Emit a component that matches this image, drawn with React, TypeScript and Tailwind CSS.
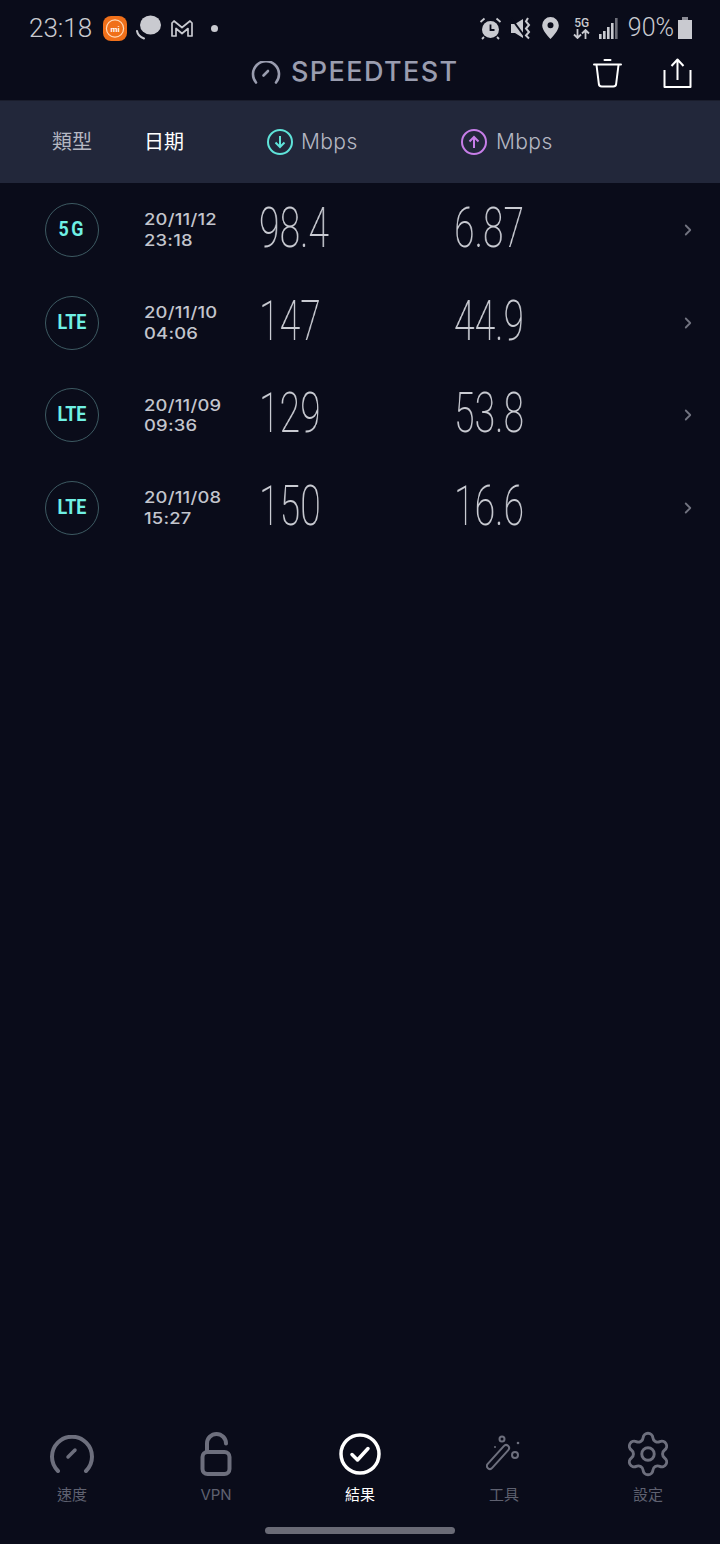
import { ChevronRight, Settings } from "lucide-react";

const SANS = "font-['Inter','Noto_Sans_CJK_TC',sans-serif]";

const RESULTS = [
  { type: "5G", date: "20/11/12", time: "23:18", down: "98.4", up: "6.87" },
  { type: "LTE", date: "20/11/10", time: "04:06", down: "147", up: "44.9" },
  { type: "LTE", date: "20/11/09", time: "09:36", down: "129", up: "53.8" },
  { type: "LTE", date: "20/11/08", time: "15:27", down: "150", up: "16.6" },
];

function StatusBar() {
  return (
    <div className="flex h-[50px] items-center pl-[29px] pr-[28px] pt-[6px] text-[#c9cad0]">
      <span className="w-[74px] font-['Roboto',sans-serif] text-[26px] font-light">23:18</span>
      {/* mi badge */}
      <svg width="24" height="25" viewBox="0 0 24 25">
        <rect width="24" height="25" rx="8" fill="#f0701a" />
        <circle cx="12" cy="12.500" r="8.600" fill="none" stroke="#ffd9b8" strokeWidth="1.200" />
        <text x="12" y="15.500" textAnchor="middle" fontSize="8" fontWeight="700" fontFamily="Roboto, sans-serif" fill="#fff">mi</text>
      </svg>
      <svg className="ml-[9px]" width="25" height="26" viewBox="0 0 25 26" fill="#c9cad0">
        <ellipse cx="14.500" cy="10" rx="10.500" ry="9.500" />
        <path d="M1 16c.5 3 3 6 7 7.500" fill="none" stroke="#c9cad0" strokeWidth="2" strokeLinecap="round" />
      </svg>
      <svg className="ml-[10px]" width="22" height="17" viewBox="0 0 22 17" fill="none" stroke="#c9cad0" strokeWidth="1.700" strokeLinejoin="round">
        <path d="M1 16V3l2-2 8 6.500L19 1l2 2v13h-4V8.500L11 13.500 5 8.500V16z" />
      </svg>
      <span className="ml-[18px] h-[7px] w-[7px] rounded-full bg-[#c9cad0]" />
      <div className="flex-1" />
      <svg width="23" height="23" viewBox="0 0 23 23" fill="#c9cad0">
        <circle cx="11.500" cy="12.500" r="8.500" />
        <path d="M11.500 7.500v5.500h4" fill="none" stroke="#0a0c1a" strokeWidth="1.800" />
        <path d="M1.500 5l4-3.500M21.500 5l-4-3.500M5 20l-2 2M18 20l2 2" fill="none" stroke="#c9cad0" strokeWidth="1.800" />
      </svg>
      <svg className="ml-[8px]" width="23" height="23" viewBox="0 0 23 23" fill="#c9cad0">
        <path d="M1 7h4l8-5v19l-8-5H1z" />
        <path d="M1 1l14 19" stroke="#0a0c1a" strokeWidth="2" />
        <path d="M18 1l-2 3.500 3 3.500-3 3.500 3 3.500-3 3.500 3 3" fill="none" stroke="#c9cad0" strokeWidth="2" />
      </svg>
      <svg className="ml-[9px]" width="17" height="22" viewBox="0 0 17 22" fill="#c9cad0">
        <path fillRule="evenodd" d="M8.500 0a8.300 8.300 0 0 1 8.300 8.300c0 5-5.300 10.500-8.300 13.700C5.500 18.800.2 13.300.2 8.300A8.300 8.300 0 0 1 8.500 0zm0 5.300a3 3 0 1 0 0 6 3 3 0 0 0 0-6z" />
      </svg>
      <div className="ml-[14px] flex w-[18px] flex-col items-center leading-none">
        <span className="font-['Roboto',sans-serif] text-[12px] font-medium leading-[12px]">5G</span>
        <svg width="17" height="10" viewBox="0 0 17 10" fill="none" stroke="#c9cad0" strokeWidth="1.800">
          <path d="M4.500 0v9M1 5.500l3.500 3.500L8 5.500M12.500 10V1M9 4.500L12.500 1 16 4.500" />
        </svg>
      </div>
      <svg className="ml-[8px]" width="19" height="21" viewBox="0 0 19 21" fill="#c9cad0">
        <rect x="0" y="16" width="2.600" height="5" />
        <rect x="4" y="13" width="2.600" height="8" />
        <rect x="8" y="9" width="2.600" height="12" />
        <rect x="12" y="5" width="2.600" height="16" />
        <rect x="16" y="0" width="2.600" height="21" fill="#6e6f79" />
      </svg>
      <span className="ml-[10px] font-['Roboto',sans-serif] text-[25px] font-light">90%</span>
      <svg className="ml-[4px]" width="14" height="22" viewBox="0 0 14 22" fill="#c9cad0">
        <rect x="4" y="0" width="6" height="3" fill="#8c8d96" />
        <rect x="0" y="3" width="14" height="19" />
      </svg>
    </div>
  );
}

function Header() {
  return (
    <div className="flex h-[50px] items-center pb-[5px] pl-[251px] pr-[28px]">
      <svg width="30" height="24" viewBox="0 0 30 24" fill="none" stroke="#9a9daf" strokeWidth="2.600" strokeLinecap="round">
        <path d="M5 21.500a13 13 0 1 1 20 0" />
        <path d="M12.500 14.500l4.500-4.500" />
      </svg>
      <span className={`ml-[10px] text-[27px] font-medium tracking-[1.400px] text-[#9a9daf] ${SANS}`}>SPEEDTEST</span>
      <div className="flex-1" />
      <svg width="29" height="30" viewBox="0 0 29 30" fill="none" stroke="#fff" strokeWidth="2" strokeLinejoin="round" strokeLinecap="round">
        <path d="M1 6.500h27M11.500 2h6" />
        <path d="M3.500 7l2.300 18.500a3 3 0 0 0 3 3h11.400a3 3 0 0 0 3-3L25.500 7" />
      </svg>
      <svg className="ml-[41px]" width="29" height="30" viewBox="0 0 29 30" fill="none" stroke="#fff" strokeWidth="2" strokeLinejoin="round">
        <path d="M1.500 12v17h26V12" />
        <path d="M14.500 22V2M8.500 8l6-6.500 6 6.500" />
      </svg>
    </div>
  );
}

function TableHead() {
  return (
    <div className={`flex h-[83px] items-center border-t border-[#1a1d2c] bg-[#22273a] text-[20px] ${SANS}`}>
      <span className="ml-[52px] w-[92px] text-[#b5b7c2]">類型</span>
      <span className="w-[123px] text-white">日期</span>
      <svg width="26" height="26" viewBox="0 0 26 26" fill="none" stroke="#5fe3d9" strokeWidth="2">
        <circle cx="13" cy="13" r="12" />
        <path d="M13 7v11M8.500 13.500L13 18l4.500-4.500" />
      </svg>
      <span className="ml-[8px] w-[160px] text-[21px] font-light tracking-[0.4px] text-[#b5b7c2]">Mbps</span>
      <svg width="26" height="26" viewBox="0 0 26 26" fill="none" stroke="#c77ee8" strokeWidth="2">
        <circle cx="13" cy="13" r="12" />
        <path d="M13 19V8M8.500 12.500L13 8l4.500 4.500" />
      </svg>
      <span className="ml-[9px] text-[21px] font-light tracking-[0.4px] text-[#b5b7c2]">Mbps</span>
    </div>
  );
}

function Row({ r }: { r: (typeof RESULTS)[number] }) {
  return (
    <div className="flex h-[92.700px] items-center pl-[45px] pr-[23px]">
      <div className="flex h-[54px] w-[54px] items-center justify-center rounded-full border border-[#3d5a62]">
        <span className={`scale-x-[0.85] font-['Roboto',sans-serif] text-[21px] font-bold text-[#6ff0e4] ${r.type === "5G" ? "tracking-[3px]" : "tracking-[0px]"}`}>{r.type}</span>
      </div>
      <div className={`ml-[45px] w-[115px] origin-left scale-x-[1.15] text-[16px] font-medium leading-[20.500px] tracking-[0.2px] text-[#c3c5cd] ${SANS}`}>
        <p>{r.date}</p>
        <p>{r.time}</p>
      </div>
      <span className="w-[195px] origin-left scale-x-[0.68] pb-[3px] font-['Roboto',sans-serif] text-[55px] font-extralight leading-none text-[#c9cbd2] will-change-transform">{r.down}</span>
      <span className="w-[195px] origin-left scale-x-[0.68] pb-[3px] font-['Roboto',sans-serif] text-[55px] font-extralight leading-none text-[#c9cbd2] will-change-transform">{r.up}</span>
      <div className="flex-1" />
      <ChevronRight size={18} strokeWidth={2.400} className="text-[#71737f]" />
    </div>
  );
}

function NavItem({ label, active, children }: { label: string; active?: boolean; children: React.ReactNode }) {
  return (
    <div className="flex flex-col items-center">
      <div className="flex h-[46px] items-center justify-center">{children}</div>
      <span className={`mt-[8px] text-[15px] leading-[20px] ${SANS} ${active ? "text-white" : "text-[#5f6170]"}`}>{label}</span>
    </div>
  );
}

export default function App() {
  return (
    <div className="flex h-[1544px] w-[720px] flex-col overflow-hidden bg-[#0a0c1a]">
      <StatusBar />
      <Header />
      <TableHead />
      <div className="flex-1 pt-[0.500px]">
        {RESULTS.map((r) => (
          <Row key={r.date} r={r} />
        ))}
      </div>
      {/* bottom tabs */}
      <div className="grid grid-cols-5">
        <NavItem label="速度">
          <svg width="44" height="38" viewBox="0 0 44 38" fill="none" stroke="#6d6f7d" strokeWidth="4" strokeLinecap="round">
            <path d="M8 36a20 20 0 1 1 28 0" />
            <path d="M18 22l7-7" strokeWidth="3.500" />
          </svg>
        </NavItem>
        <NavItem label="VPN">
          <svg width="32" height="44" viewBox="0 0 32 44" fill="none" stroke="#6d6f7d" strokeWidth="4" strokeLinejoin="round" strokeLinecap="round">
            <rect x="2.500" y="20" width="27" height="22" rx="5" />
            <path d="M7 20V11.500a9.500 9.500 0 0 1 19 0" />
          </svg>
        </NavItem>
        <NavItem label="結果" active>
          <svg width="42" height="42" viewBox="0 0 42 42" fill="none" stroke="#fff" strokeWidth="3.500" strokeLinecap="round" strokeLinejoin="round">
            <circle cx="21" cy="21" r="19" />
            <path d="M13 21.500l5.500 5.500L29 15.500" />
          </svg>
        </NavItem>
        <NavItem label="工具">
          <svg width="36" height="38" viewBox="0 0 36 38" fill="none" stroke="#6d6f7d" strokeWidth="2" strokeLinejoin="round">
            <rect x="-3" y="19" width="30" height="6" rx="3" transform="rotate(-48 12 22)" />
            <circle cx="16" cy="4" r="2.500" />
            <circle cx="29" cy="20" r="3" />
            <circle cx="32" cy="8" r="1.300" fill="#6d6f7d" strokeWidth="0" />
            <circle cx="9" cy="12" r="1" fill="#6d6f7d" strokeWidth="0" />
          </svg>
        </NavItem>
        <NavItem label="設定">
          <Settings size={50} strokeWidth={1.400} className="text-[#6d6f7d]" />
        </NavItem>
      </div>
      <div className="flex h-[39px] justify-center pt-[22px]">
        <div className="h-[7px] w-[190px] rounded-full bg-[#6a6b76]" />
      </div>
    </div>
  );
}
